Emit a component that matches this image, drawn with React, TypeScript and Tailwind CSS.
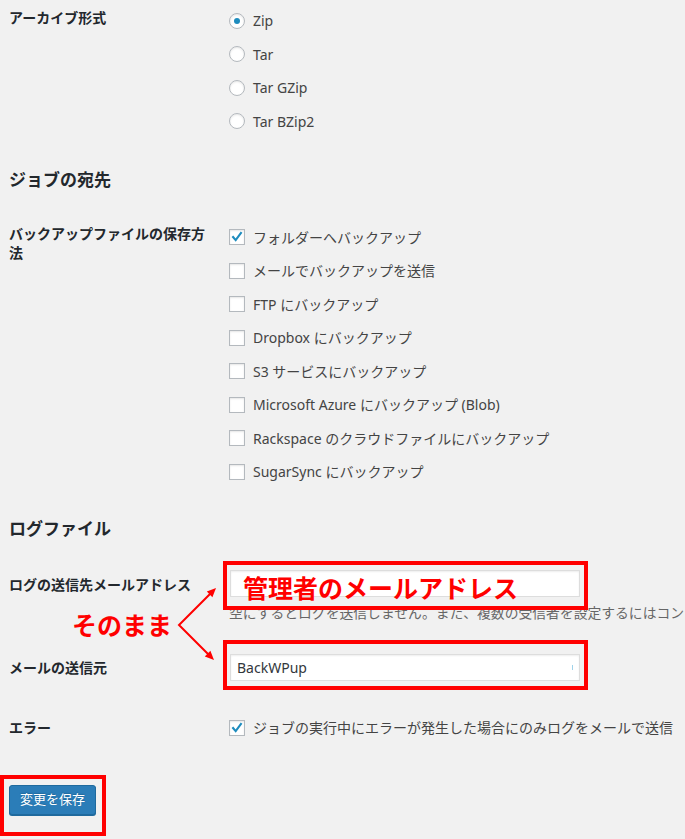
const font = {fontFamily: '"Noto Sans", "Noto Sans CJK JP", sans-serif'};

const archives = ['Zip', 'Tar', 'Tar GZip', 'Tar BZip2'];

const destinations = [
  {name: 'フォルダーへバックアップ', checked: true},
  {name: 'メールでバックアップを送信', checked: false},
  {name: 'FTP にバックアップ', checked: false},
  {name: 'Dropbox にバックアップ', checked: false},
  {name: 'S3 サービスにバックアップ', checked: false},
  {name: 'Microsoft Azure にバックアップ (Blob)', checked: false},
  {name: 'Rackspace のクラウドファイルにバックアップ', checked: false},
  {name: 'SugarSync にバックアップ', checked: false},
];

function Radio({checked}: {checked: boolean}) {
  return (
    <span className="flex h-4 w-4 shrink-0 items-center justify-center rounded-full border border-[#b4b9be] bg-white shadow-[inset_0_1px_2px_rgba(0,0,0,0.1)]">
      {checked ? <span className="h-[6px] w-[6px] rounded-full bg-[#1e8cbe]" /> : null}
    </span>
  );
}

function Checkbox({checked}: {checked: boolean}) {
  return (
    <span className="flex h-4 w-4 shrink-0 items-center justify-center border border-[#b4b9be] bg-white shadow-[inset_0_1px_2px_rgba(0,0,0,0.1)]">
      {checked ? (
        <svg viewBox="0 0 16 16" className="h-4 w-4">
          <polyline
            points="3.5,8 6.5,11.5 12.5,3.5"
            fill="none"
            stroke="#1e8cbe"
            strokeWidth="2.4"
            strokeLinecap="square"
          />
        </svg>
      ) : null}
    </span>
  );
}

function Label({children, className = ''}: {children: React.ReactNode; className?: string}) {
  return (
    <div className={`w-[200px] shrink-0 text-[14px] font-semibold leading-[19px] text-[#23282d] ${className}`}>
      {children}
    </div>
  );
}

function Option({children}: {children: React.ReactNode}) {
  return (
    <label className="flex h-[33.5px] items-center gap-2 whitespace-nowrap text-[14px] text-[#444]">
      {children}
    </label>
  );
}

function Annotations() {
  return (
    <div className="pointer-events-none absolute inset-0">
      <div className="absolute left-[223px] top-[561px] h-[49px] w-[365px] border-4 border-[#ff0000]" />
      <div className="absolute left-[223px] top-[640px] h-[50px] w-[365px] border-4 border-[#ff0000]" />
      <div className="absolute left-0 top-[775px] h-[61px] w-[106px] border-4 border-[#ff0000]" />
      <div className="absolute left-[243px] top-[576px] whitespace-nowrap text-[25px] font-semibold leading-[25px] text-[#ff0000]">
        管理者のメールアドレス
      </div>
      <div className="absolute left-[72px] top-[613px] whitespace-nowrap text-[25px] font-semibold leading-[25px] text-[#ff0000]">
        そのまま
      </div>
      <svg className="absolute left-0 top-0" width="685" height="839">
        <polyline points="211,593 179,625 209,655" fill="none" stroke="#ff0000" strokeWidth="2" />
        <polygon points="216,588 212.4,597.2 206.8,591.6" fill="#ff0000" />
        <polygon points="214,660 210.4,650.8 204.8,656.4" fill="#ff0000" />
      </svg>
    </div>
  );
}

export default function App() {
  return (
    <div className="relative h-[839px] w-full overflow-hidden bg-[#f1f1f1]" style={font}>
      <div className="pl-[9px] pt-[4px]">
        <div className="flex gap-5">
          <Label className="mt-[4px]">アーカイブ形式</Label>
          <div className="flex flex-col">
            {archives.map((name, i) => (
              <Option key={name}>
                <Radio checked={i === 0} />
                {name}
              </Option>
            ))}
          </div>
        </div>

        <h2 className="mt-[30.5px] text-[17px] font-bold leading-[22px] text-[#23282d]">ジョブの宛先</h2>

        <div className="mt-[30px] flex gap-5">
          <Label className="mt-[3px]">バックアップファイルの保存方法</Label>
          <div className="flex flex-col">
            {destinations.map((d) => (
              <Option key={d.name}>
                <Checkbox checked={d.checked} />
                {d.name}
              </Option>
            ))}
          </div>
        </div>

        <h2 className="mt-[29.5px] text-[17px] font-bold leading-[22px] text-[#23282d]">ログファイル</h2>

        <div className="mt-[30px] flex gap-5">
          <Label className="mt-[5px]">ログの送信先メールアドレス</Label>
          <div className="flex min-w-0 flex-col">
            <div className="ml-px h-[27px] w-[350px] border border-[#ddd] bg-white shadow-[inset_0_1px_2px_rgba(0,0,0,0.07)]" />
            <p className="mt-[7px] whitespace-nowrap text-[13.8px] leading-[18px] text-[#666]">
              空にするとログを送信しません。また、複数の受信者を設定するにはコン
            </p>
          </div>
        </div>

        <div className="mt-[32px] flex items-center gap-5">
          <Label>メールの送信元</Label>
          <div className="ml-px flex h-[27px] w-[350px] items-center justify-between border border-[#ddd] bg-white px-[6px] text-[14px] text-[#32373c] shadow-[inset_0_1px_2px_rgba(0,0,0,0.07)]">
            <span>BackWPup</span>
            <span className="h-[5px] w-px bg-[#9fd3ea]" />
          </div>
        </div>

        <div className="mt-[30px] flex items-center gap-5">
          <Label>エラー</Label>
          <Option>
            <Checkbox checked />
            ジョブの実行中にエラーが発生した場合にのみログをメールで送信
          </Option>
        </div>

        <button className="mt-[40px] h-[30px] w-[87px] rounded-[3px] border border-[#1f6a9e] bg-[#2b7db8] text-[13px] text-white shadow-[0_1px_0_#1f6a9e] [text-shadow:0_-1px_1px_#1f6a9e]">
          変更を保存
        </button>
      </div>
      <Annotations />
    </div>
  );
}
